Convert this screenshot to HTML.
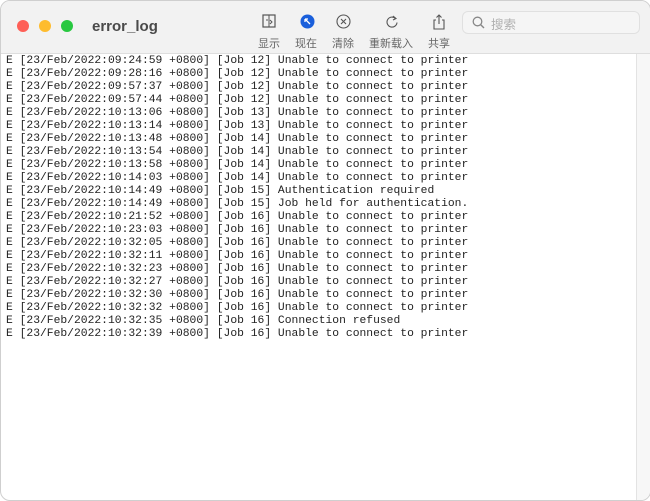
<!DOCTYPE html>
<html><head><meta charset="utf-8"><style>
body{margin:0;width:650px;height:500px;overflow:hidden;background:#fff;font-family:"Liberation Sans","Noto Sans CJK SC",sans-serif;}
.win{position:absolute;left:0;top:0;width:649px;height:499px;border:1px solid #cfcfcf;border-radius:10px;overflow:hidden;background:#fff;}
.tb{position:absolute;left:0;top:0;right:0;height:52px;background:#f2f2f2;border-bottom:1px solid #dedede;}
.dot{position:absolute;top:19px;width:12px;height:12px;border-radius:50%;}
.title{position:absolute;left:91px;top:17px;font-size:15px;font-weight:bold;color:#4a4a4a;}
.lbl{position:absolute;top:34px;font-size:11px;color:#666;}
.ic{position:absolute;top:13px;}
.search{position:absolute;left:461px;top:10px;width:176px;height:21px;border:1px solid #e0e0e0;border-radius:6px;background:#f5f5f5;font-size:12.5px;color:#b0b0b0;}
.log{position:absolute;left:5px;top:54px;font-family:"Liberation Mono",monospace;font-size:11.33px;line-height:13px;color:#222;white-space:pre;}
.sb{position:absolute;left:635px;top:53px;width:14px;bottom:0;background:#f7f7f7;border-left:1px solid #e3e3e3;}
</style></head><body><div class="win">
<div class="tb">
<div class="dot" style="left:16px;background:#fe5f57"></div>
<div class="dot" style="left:38px;background:#febc2e"></div>
<div class="dot" style="left:60px;background:#28c840"></div>
<div class="title">error_log</div>
<svg class="ic" style="left:261px" width="14" height="15" viewBox="0 0 14 15"><rect x="1" y="1" width="12" height="12" fill="none" stroke="#555" stroke-width="1.2"/><path d="M7 1v12M4 6h2M8 6l2 2-2 2" fill="none" stroke="#555"/></svg>
<svg class="ic" style="left:299px" width="15" height="15"><circle cx="7.5" cy="7.5" r="7" fill="#1a5fdb"/><path d="M5 5l5 5M5 5h3M5 5v3" stroke="#fff" stroke-width="1.3" fill="none"/></svg>
<svg class="ic" style="left:335px" width="15" height="15"><circle cx="7.5" cy="7.5" r="6.5" fill="none" stroke="#555" stroke-width="1.1"/><path d="M5 5l5 5M10 5l-5 5" stroke="#555" stroke-width="1.1"/></svg>
<svg class="ic" style="left:384px" width="14" height="16"><path d="M10.5 4.5A5 5 0 1 0 12 8.5" fill="none" stroke="#555" stroke-width="1.1"/><path d="M8 2l3 2.5-3 1.5" fill="none" stroke="#555" stroke-width="1.1"/></svg>
<svg class="ic" style="left:431px" width="14" height="16"><path d="M4 6H2v9h10V6h-2M7 1v9M4.5 3.5L7 1l2.5 2.5" fill="none" stroke="#555" stroke-width="1.1"/></svg>
<div class="lbl" style="left:257px">显示</div>
<div class="lbl" style="left:294px">现在</div>
<div class="lbl" style="left:331px">清除</div>
<div class="lbl" style="left:368px">重新载入</div>
<div class="lbl" style="left:427px">共享</div>
<div class="search"><svg style="position:absolute;left:9px;top:4px" width="13" height="13"><circle cx="5.5" cy="5.5" r="4.3" fill="none" stroke="#888" stroke-width="1.3"/><path d="M8.5 8.5l3.5 3.5" stroke="#888" stroke-width="1.4"/></svg><span style="position:absolute;left:28px;top:2px">搜索</span></div>
</div>
<div class="log">E [23/Feb/2022:09:24:59 +0800] [Job 12] Unable to connect to printer
E [23/Feb/2022:09:28:16 +0800] [Job 12] Unable to connect to printer
E [23/Feb/2022:09:57:37 +0800] [Job 12] Unable to connect to printer
E [23/Feb/2022:09:57:44 +0800] [Job 12] Unable to connect to printer
E [23/Feb/2022:10:13:06 +0800] [Job 13] Unable to connect to printer
E [23/Feb/2022:10:13:14 +0800] [Job 13] Unable to connect to printer
E [23/Feb/2022:10:13:48 +0800] [Job 14] Unable to connect to printer
E [23/Feb/2022:10:13:54 +0800] [Job 14] Unable to connect to printer
E [23/Feb/2022:10:13:58 +0800] [Job 14] Unable to connect to printer
E [23/Feb/2022:10:14:03 +0800] [Job 14] Unable to connect to printer
E [23/Feb/2022:10:14:49 +0800] [Job 15] Authentication required
E [23/Feb/2022:10:14:49 +0800] [Job 15] Job held for authentication.
E [23/Feb/2022:10:21:52 +0800] [Job 16] Unable to connect to printer
E [23/Feb/2022:10:23:03 +0800] [Job 16] Unable to connect to printer
E [23/Feb/2022:10:32:05 +0800] [Job 16] Unable to connect to printer
E [23/Feb/2022:10:32:11 +0800] [Job 16] Unable to connect to printer
E [23/Feb/2022:10:32:23 +0800] [Job 16] Unable to connect to printer
E [23/Feb/2022:10:32:27 +0800] [Job 16] Unable to connect to printer
E [23/Feb/2022:10:32:30 +0800] [Job 16] Unable to connect to printer
E [23/Feb/2022:10:32:32 +0800] [Job 16] Unable to connect to printer
E [23/Feb/2022:10:32:35 +0800] [Job 16] Connection refused
E [23/Feb/2022:10:32:39 +0800] [Job 16] Unable to connect to printer</div>
<div class="sb"></div>
</div></body></html>
